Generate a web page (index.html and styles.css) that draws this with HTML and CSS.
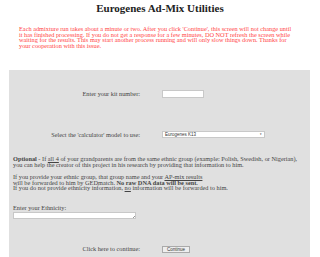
FILE: index.html
```html
<!DOCTYPE html>
<html>
<head>
	<title>Eurogenes Ad-Mix Utilities</title>
	<link rel="stylesheet" href="styles.css">
</head>
<body>
	<h1>Eurogenes Ad-Mix Utilities</h1>
	<p class="warning">Each admixture run takes about a minute or two. After you click 'Continue', this screen will not change until<br>it has finished processing. If you do not get a response for a few minutes, DO NOT refresh the screen while<br>waiting for the results. This may start another process running and will only slow things down. Thanks for<br>your cooperation with this issue.</p>
	<form class="panel">
		<div class="row kit">
			<label for="kit">Enter your kit number:</label>
			<input type="text" id="kit" class="kit-input">
		</div>
		<div class="row model">
			<label for="model">Select the 'calculator' model to use:</label>
			<div class="select" id="model">
				<span>Eurogenes K13</span>
				<span class="arrow">&#9660;</span>
			</div>
		</div>
		<p class="optional first"><b>Optional</b> - If <u>all 4</u> of your grandparents are from the same ethnic group (example: Polish, Swedish, or Nigerian),<br>you can help the creator of this project in his research by providing that information to him.</p>
		<p class="optional">If you provide your ethnic group, that group name and your <u>AP-mix results</u><br>will be forwarded to him by GEDmatch. <b>No raw DNA data will be sent.</b><br>If you do not provide ethnicity information, <u>no</u> information will be forwarded to him.</p>
		<label class="eth-label" for="eth">Enter your Ethnicity:</label>
		<div class="textarea" id="eth"><span class="grip"></span></div>
		<div class="row submit">
			<label>Click here to continue:</label>
			<span class="button">Continue</span>
		</div>
	</form>
</body>
</html>
```
FILE: styles.css
```css
body {
	margin: 0;
	background-color: #fff;
	font-family: "Liberation Serif", "Times New Roman", serif;
	color: #444;
}

h1 {
	margin: 3px 0 0;
	font-size: 11px;
	line-height: 11px;
	text-align: center;
	color: #222;
}

.warning {
	margin: 12px 0 0 19px;
	white-space: nowrap;
	font-size: 6.3px;
	line-height: 5.6px;
	color: #f44;
}

.panel {
	margin: 21.6px 0 0 9px;
	width: 301px;
	height: 187px;
	box-sizing: border-box;
	background-color: #e0e0e0;
	padding-top: 20px;
	font-size: 6.3px;
	line-height: 5.6px;
}

.row {
	display: grid;
	grid-template-columns: 131px 1fr;
	column-gap: 22px;
	align-items: center;
}

.row label {
	text-align: right;
}

.kit-input {
	display: block;
	width: 42px;
	height: 8px;
	box-sizing: border-box;
	border: 1px solid #c8c8c8;
	background-color: #fff;
	padding: 0;
	margin: 0;
}

.model {
	margin-top: 33px;
}

.select {
	width: 103px;
	height: 7px;
	box-sizing: border-box;
	border: 1px solid #c8c8c8;
	background-color: #fff;
	display: flex;
	justify-content: space-between;
	align-items: center;
	padding: 0 2px;
	font-family: "Liberation Sans", Arial, sans-serif;
	font-size: 4.5px;
	color: #333;
}

.arrow {
	font-size: 2.5px;
}

.optional {
	margin: 0 0 7px 4px;
	white-space: nowrap;
}

.optional.first {
	margin-top: 18px;
}

.eth-label {
	display: block;
	margin: 14px 0 0 4px;
}

.textarea {
	position: relative;
	margin: 1px 0 0 4px;
	width: 123px;
	height: 7px;
	box-sizing: border-box;
	border: 1px solid #c8c8c8;
	background-color: #fff;
}

.grip {
	position: absolute;
	right: 0;
	bottom: 0;
	width: 3px;
	height: 3px;
	background: linear-gradient(135deg, transparent 55%, #999 55%, #999 70%, transparent 70%);
}

.submit {
	margin-top: 27px;
}

.button {
	width: 28px;
	height: 7px;
	box-sizing: border-box;
	border: 1px solid #aaa;
	background-color: #eee;
	font-family: "Liberation Sans", Arial, sans-serif;
	font-size: 4.5px;
	line-height: 5px;
	text-align: center;
	color: #333;
}
```
